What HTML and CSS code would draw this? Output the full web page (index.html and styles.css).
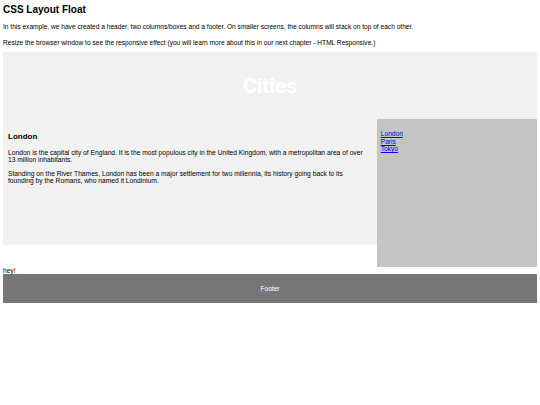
FILE: index.html
```html
<!DOCTYPE html>
<html>
<head>
<meta charset="utf-8">
<link rel="stylesheet" href="styles.css">
</head>
<body>
<h2 class="title">CSS Layout Float</h2>
<p class="intro">In this example, we have created a header, two columns/boxes and a footer. On smaller screens, the columns will stack on top of each other.</p>
<p class="intro">Resize the browser window to see the responsive effect (you will learn more about this in our next chapter - HTML Responsive.)</p>
<header class="header"><h2 class="header-title">Cities</h2></header>
<section class="row">
  <article class="article">
    <h1 class="article-title">London</h1>
    <p class="text">London is the capital city of England. It is the most populous city in the United Kingdom, with a metropolitan area of over 13 million inhabitants.</p>
    <p class="text">Standing on the River Thames, London has been a major settlement for two millennia, its history going back to its founding by the Romans, who named it Londinium.</p>
  </article>
  <nav class="nav">
    <ul class="nav-list">
      <li><a href="#">London</a></li>
      <li><a href="#">Paris</a></li>
      <li><a href="#">Tokyo</a></li>
    </ul>
  </nav>
</section>
<div class="hey">hey!</div>
<footer class="footer"><p class="footer-text">Footer</p></footer>
</body>
</html>
```
FILE: styles.css
```css
* { box-sizing: border-box; }
html, body { background: #fff; }
body {
  margin: 0;
  padding: 0 3px;
  font-family: "Liberation Sans", Arial, sans-serif;
  font-size: 6.6px;
  color: #000;
}
.title {
  font-size: 10px;
  font-weight: bold;
  margin: 0;
  padding-top: 4px;
  line-height: 11px;
}
.intro {
  margin: 8px 0 0 0;
  line-height: 7.5px;
}
.header {
  margin-top: 6px;
  background: #f1f1f1;
  height: 67px;
  display: flex;
  align-items: center;
  justify-content: center;
}
.header-title {
  margin: 0;
  color: #fff;
  font-family: Roboto, "Liberation Sans", sans-serif;
  font-size: 21px;
  font-weight: bold;
  line-height: 24px;
}
.row {
  display: flex;
  align-items: flex-start;
}
.article {
  width: 70%;
  height: 126px;
  background: #f1f1f1;
  padding: 13px 8px 0 5px;
}
.article-title {
  font-size: 8px;
  font-weight: bold;
  margin: 0 0 8px 0;
  line-height: 9px;
}
.text {
  font-size: 6.7px;
  margin: 0 0 7px 0;
  line-height: 7px;
}
.nav {
  width: 30%;
  height: 148px;
  background: #c4c4c4;
  padding: 11px 4px 0 4px;
}
.nav-list {
  list-style: none;
  margin: 0;
  padding: 0;
  line-height: 7.5px;
}
.nav-list a { color: #0000ee; text-decoration: underline; }
.hey {
  line-height: 7px;
  margin-top: 0;
}
.footer {
  background: #777;
  height: 29px;
  display: flex;
  align-items: center;
  justify-content: center;
}
.footer-text {
  margin: 0;
  color: #fff;
  line-height: 8px;
}
```
